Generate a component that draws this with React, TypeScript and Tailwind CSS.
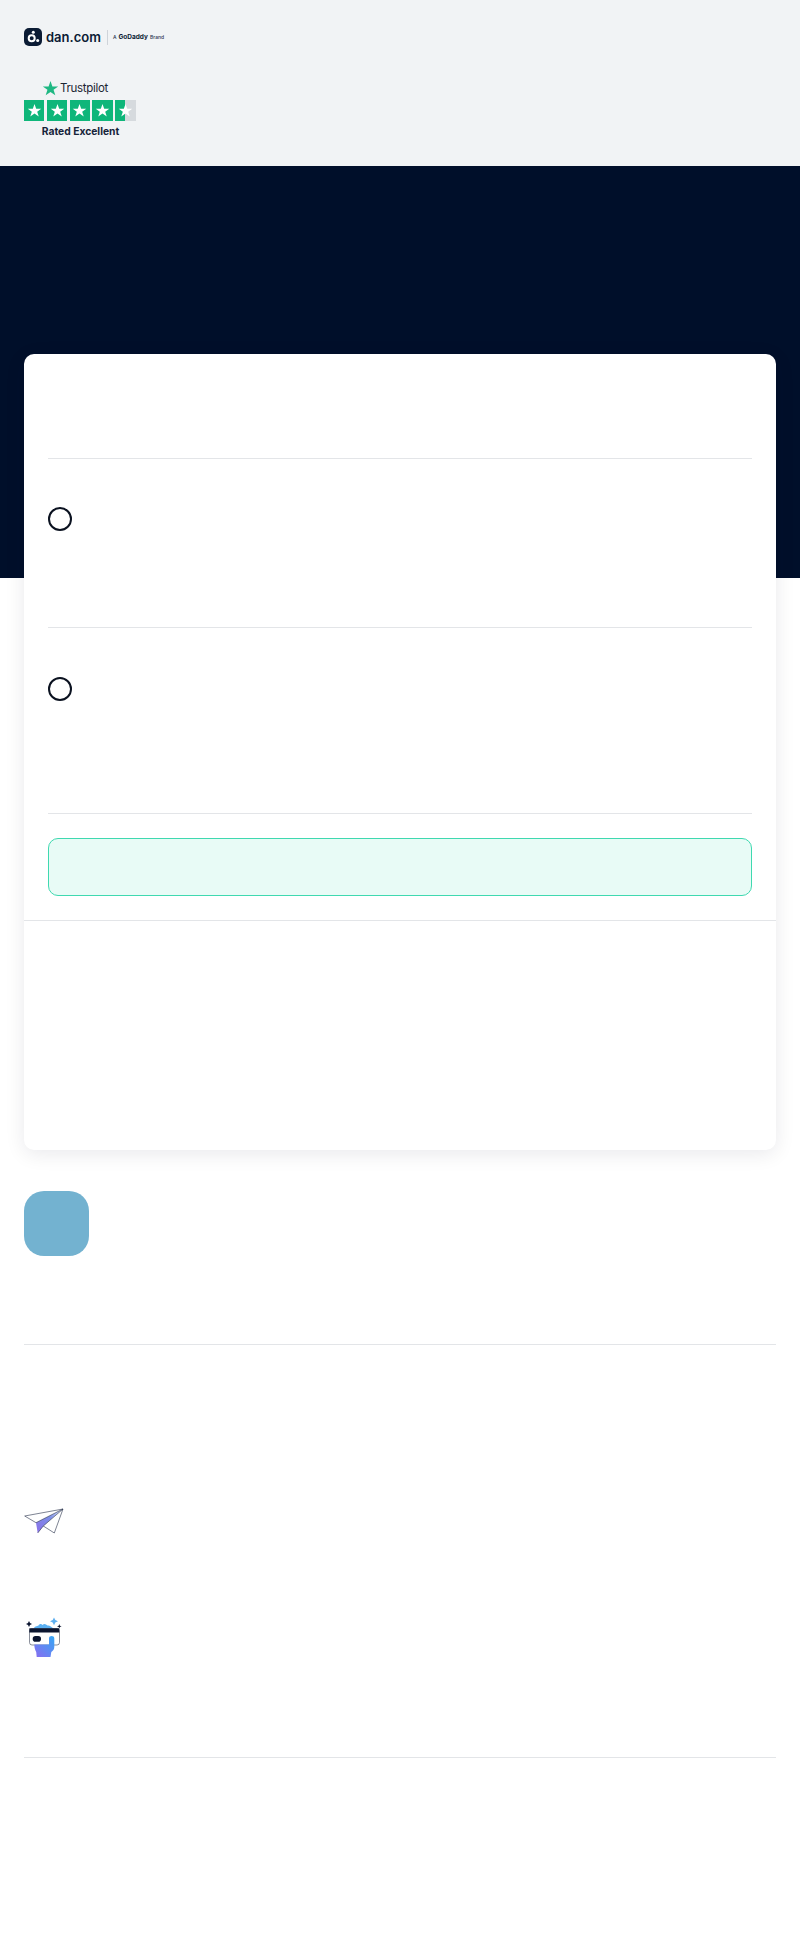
import { useId } from 'react'

const font = { inter: 'font-["Inter",sans-serif]' }

function Star({ className }: { className?: string }) {
  return (
    <svg viewBox="0 0 24 24" className={className} fill="currentColor">
      <path d="M12 1.5l2.7 7.6h8.1l-6.5 4.8 2.5 7.7L12 16.9l-6.8 4.7 2.5-7.7L1.2 9.1h8.1z" />
    </svg>
  )
}

function DanLogo() {
  return (
    <div className={`flex items-center ${font.inter}`}>
      <div className="flex h-[18px] w-[18px] items-center justify-center rounded-[5px] bg-[#0b1b34]">
        <svg viewBox="0 0 18 18" className="h-[18px] w-[18px]">
          <circle cx="7.700" cy="10.300" r="3" fill="none" stroke="#fff" strokeWidth="2" />
          <circle cx="9.300" cy="4.300" r="1.500" fill="#fff" />
          <circle cx="13.700" cy="12.500" r="1.500" fill="#fff" />
        </svg>
      </div>
      <span className="ml-[4px] text-[13px] leading-[18px] font-semibold text-[#0b1b34]">dan.com</span>
      <div className="ml-[6px] h-[15px] w-px bg-[#cfd3d9]" />
      <span className="ml-[5px] flex items-center text-[5px] leading-[18px] font-medium text-[#2a3650]">
        A
        <span className="mx-[2px] text-[6.500px] font-bold text-[#0b1b34]">GoDaddy</span>
        Brand
      </span>
    </div>
  )
}

function Trustpilot() {
  return (
    <div className={`mt-[33px] w-[112px] ${font.inter}`}>
      <div className="flex h-[18px] items-center pl-[18px]">
        <Star className="h-[17px] w-[17px] text-[#1fb883]" />
        <span className="ml-[1px] text-[11.500px] leading-[18px] tracking-[-0.3px] text-[#1c2433]">Trustpilot</span>
      </div>
      <div className="mt-[3px] flex gap-[2.300px]">
        {[0, 1, 2, 3].map((i) => (
          <div key={i} className="flex h-[21px] w-[20.500px] items-center justify-center bg-[#0fb67a]">
            <Star className="h-[15px] w-[15px] text-white" />
          </div>
        ))}
        <div className="flex h-[21px] w-[21px] items-center justify-center bg-[linear-gradient(90deg,#0fb67a_50%,#d6dade_50%)]">
          <Star className="h-[15px] w-[15px] text-white" />
        </div>
      </div>
      <p className="mt-[3px] pl-[1px] text-center text-[10.300px] leading-[14px] font-bold text-[#16233a]">Rated Excellent</p>
    </div>
  )
}

function Radio() {
  return <div className="h-6 w-6 rounded-full border-2 border-[#0b1220]" />
}

function PlaneIcon() {
  const id = useId()
  return (
    <svg viewBox="0 0 40 30" className="h-[30px] w-10">
      <defs>
        <linearGradient id={id} x1="0" y1="1" x2="1" y2="0">
          <stop offset="0" stopColor="#8a6fe8" />
          <stop offset="0.6" stopColor="#7d8fe8" />
          <stop offset="1" stopColor="#dfe6fa" />
        </linearGradient>
      </defs>
      <path d="M38 3.500L12 16.700l1.700 10.300 5.600-7z" fill={`url(#${id})`} />
      <path d="M39 3L0.700 10l11.300 6.700M39 3L30.300 27l-11-7M39 3L19.300 20M39 3L12 16.700M13.700 27L19.300 20" fill="none" stroke="#26304a" strokeWidth="0.600" strokeLinejoin="round" />
    </svg>
  )
}

function CardIcon() {
  const id = useId()
  return (
    <svg viewBox="0 0 40 44" className="h-11 w-10">
      <defs>
        <linearGradient id={id} x1="0" y1="1" x2="1" y2="0">
          <stop offset="0" stopColor="#8a6cf0" />
          <stop offset="1" stopColor="#35a7f5" />
        </linearGradient>
      </defs>
      <path d="M10 14c0-3 3-2.500 4.500-3.500 1-2 3-2 4-.5 2-2 3.500-.5 5 .5 2-.5 3.500 1 6.500 3.500z" fill="#5bb0f2" />
      <rect x="5.500" y="13.500" width="30" height="16.500" rx="2.500" fill="#fff" stroke="#3c4458" strokeWidth="0.600" />
      <rect x="5.300" y="13.300" width="30" height="4.200" fill="#0b1530" />
      <rect x="8.700" y="21" width="8.300" height="5.700" rx="2.800" fill="#0b1530" />
      <path d="M10.300 29.500H25v-6c0-3.200 5.300-3.200 5.300 0V32c0 3-2 4-3 5l-.8 5H12.700l-.5-5c-1-2-1.900-4.500-1.900-7.500z" fill={`url(#${id})`} />
      <path d="M5 6l1 2 2 1-2 1-1 2-1-2-2-1 2-1zM35.300 9l.6 1.700 1.700.6-1.700.6-.6 1.700-.6-1.700-1.700-.6 1.700-.6z" fill="#0b1530" />
      <path d="M30 2.500l1.300 2.500 2.700 1.300-2.700 1.300L30 10.200l-1.300-2.600-2.700-1.300 2.700-1.300z" fill="#5fb0f0" />
    </svg>
  )
}

export default function App() {
  return (
    <div className="h-[1952px] overflow-hidden bg-white">
      <header className="h-[166px] bg-[#f1f3f5] px-6 pt-[28px]">
        <DanLogo />
        <Trustpilot />
      </header>

      <div className="h-[412px] bg-[#000f2a]" />

      <main className="px-6">
        <div className="relative -mt-[224px] h-[796px] rounded-[10px] bg-white shadow-[0_4px_20px_rgba(0,15,42,0.09)]">
          <div className="mx-6 h-[105px] border-b border-[#e3e5e8]" />
          <div className="mx-6 h-[169px] border-b border-[#e3e5e8] pt-[48px]">
            <Radio />
          </div>
          <div className="mx-6 h-[186px] border-b border-[#e3e5e8] pt-[49px]">
            <Radio />
          </div>
          <div className="border-b border-[#e3e5e8] px-6 py-6">
            <div className="h-[58px] rounded-[10px] border border-[#3fd9b0] bg-[#e8fbf6]" />
          </div>
        </div>

        <div className="mt-[41px] h-[154px] border-b border-[#e3e5e8]">
          <div className="h-[65px] w-[65px] rounded-[20px] bg-[#73b2d0]" />
        </div>

        <div className="mt-[161px]">
          <PlaneIcon />
        </div>
        <div className="mt-[79px] h-[143px] border-b border-[#e3e5e8]">
          <CardIcon />
        </div>
      </main>
    </div>
  )
}
